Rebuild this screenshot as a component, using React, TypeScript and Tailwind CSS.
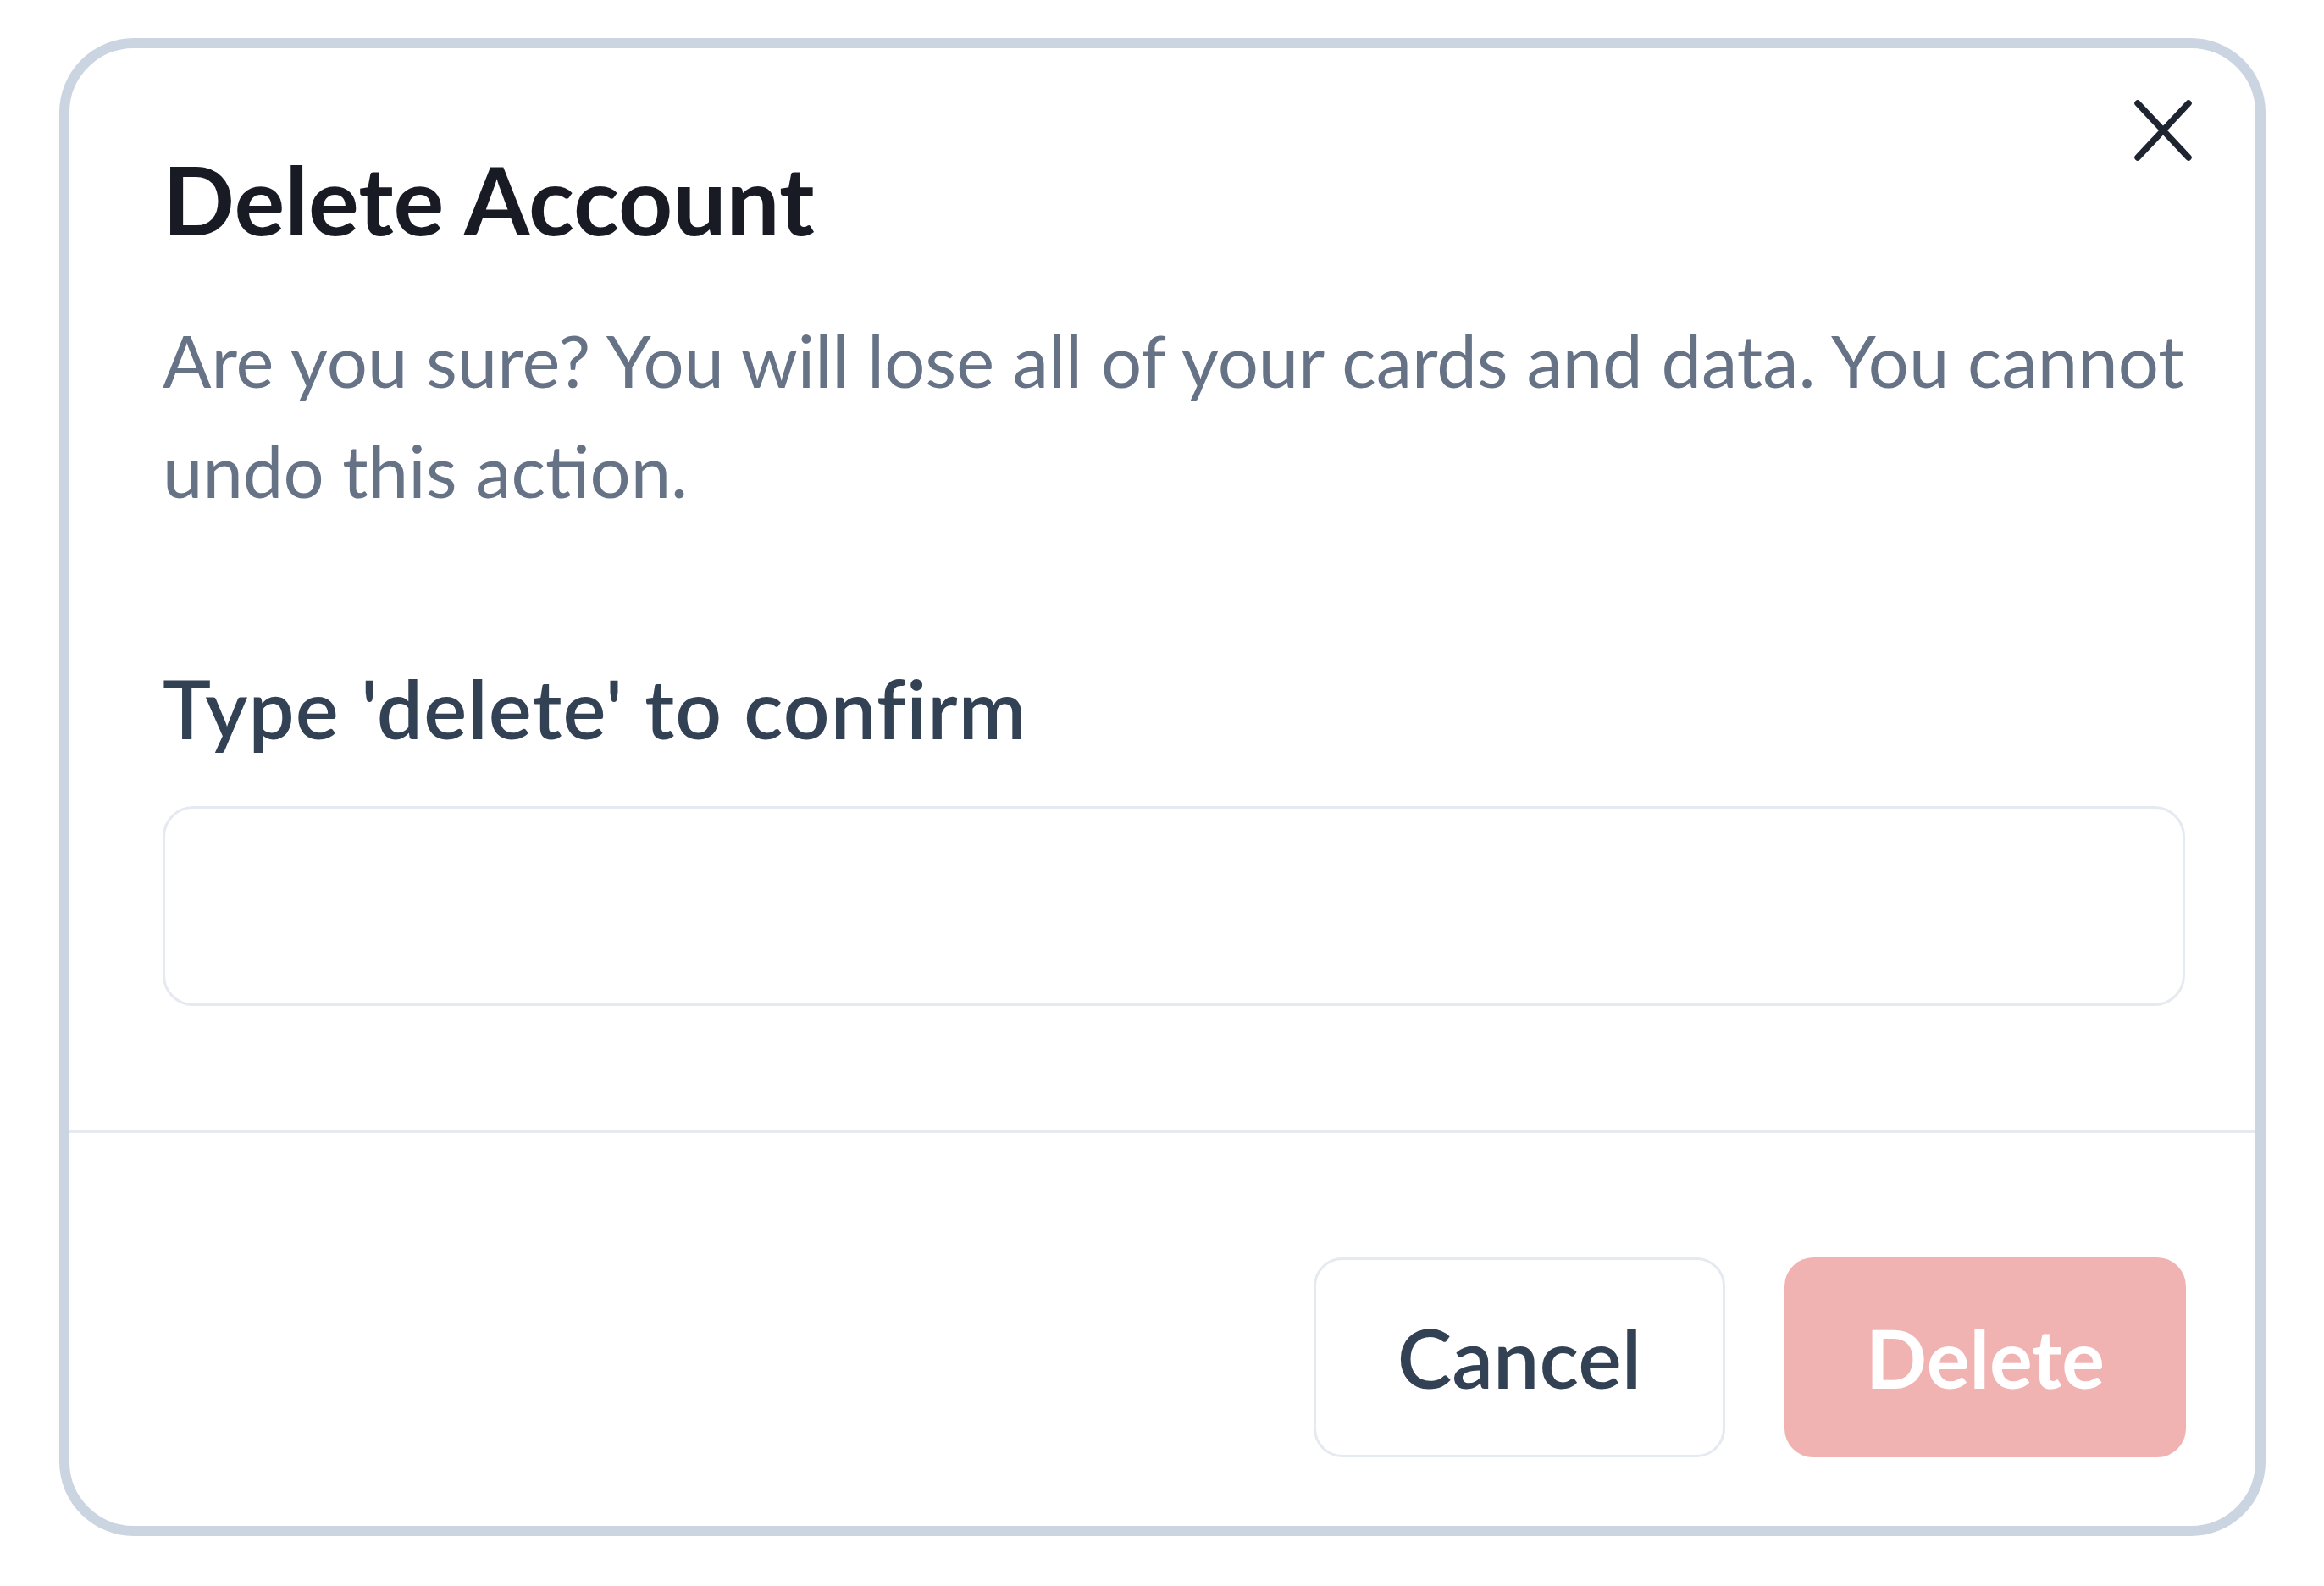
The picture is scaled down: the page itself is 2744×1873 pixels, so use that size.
import React from "react";

export default function App() {
  return (
    <div className="min-h-screen w-full bg-white pt-[45px] pl-[70px] font-['Lato',sans-serif]">
      <div className="relative w-[2605px] rounded-[88px] border-[12px] border-[#cbd5e1] bg-white overflow-hidden">
        <button
          type="button"
          aria-label="Close"
          className="absolute top-[57px] right-[71px] w-[76px] h-[80px] p-0 bg-transparent"
        >
          <svg width="76" height="80" viewBox="0 0 76 80" fill="none">
            <path
              d="M8 8 L68 72 M68 8 L8 72"
              stroke="#1e2430"
              strokeWidth="7.5"
              strokeLinecap="round"
            />
          </svg>
        </button>

        <div className="pl-[110px] pr-[83px] pt-[110px] pb-[147px]">
          <h2 className="text-[112px] leading-[136px] font-bold text-[#181b24]">
            Delete Account
          </h2>
          <p className="mt-[57px] text-[85px] leading-[130px] font-normal text-[#667286]">
            <span className="whitespace-nowrap">
              Are you sure? You will lose all of your cards and data. You cannot
            </span>
            <br />
            <span className="whitespace-nowrap">undo this action.</span>
          </p>
          <label className="block mt-[147px] text-[96px] leading-[138px] tracking-[1.2px] font-semibold text-[#334155]">
            Type 'delete' to confirm
          </label>
          <input
            type="text"
            className="block mt-[47px] w-full h-[236px] rounded-[36px] border-[3px] border-[#e5e9f0] bg-white px-[40px] text-[86px] outline-none"
          />
        </div>

        <div className="border-t-[3px] border-[#e5e9f0] flex justify-end gap-[70px] pt-[147px] pb-[81px] pr-[82px]">
          <button
            type="button"
            className="w-[486px] h-[236px] rounded-[34px] border-[3px] border-[#e5e9f0] bg-white flex items-center justify-center text-[97px] font-semibold text-[#334155]"
          >
            Cancel
          </button>
          <button
            type="button"
            className="w-[474px] h-[236px] rounded-[34px] bg-[#f1b2b2] flex items-center justify-center text-[95px] font-bold text-white"
          >
            Delete
          </button>
        </div>
      </div>
    </div>
  );
}
